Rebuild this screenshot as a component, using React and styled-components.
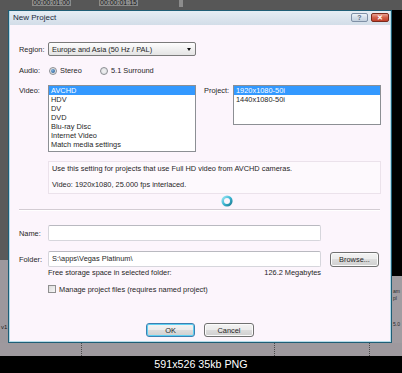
import React from "react";
import styled, { createGlobalStyle } from "styled-components";

const Global = createGlobalStyle`
  html, body { margin: 0; padding: 0; background: #000; }
  #root { width: 402px; height: 373px; }
`;

const Screen = styled.div`
  width: 402px;
  height: 373px;
  display: flex;
  flex-direction: column;
  overflow: hidden;
  font-family: "Liberation Sans", Arial, sans-serif;
`;

const Shot = styled.div`
  height: 356px;
  display: flex;
  flex-direction: column;
  background: #9e999e;
`;

const Ruler = styled.div`
  height: 10px;
  background: #575757;
  display: flex;
  align-items: flex-start;
  font-size: 7px;
  line-height: 6px;
  color: #161616;
  overflow: hidden;
`;

const Timecode = styled.span`
  margin-left: ${(p) => p.$ml}px;
  background: #8c8c8c;
  padding: 0 1px;
  height: 6px;
`;

const RulerMark = styled.span`
  margin-left: ${(p) => p.$ml}px;
  width: 4px;
  height: 7px;
  background: #8c8c8c;
`;

const Stage = styled.div`
  height: 333px;
  display: flex;
`;

const LeftTrack = styled.div`
  width: 8px;
  background: linear-gradient(#5a5a5a 0 250px, #9d989d 250px);
  display: flex;
  flex-direction: column;
  justify-content: flex-end;
  font-size: 6px;
  color: #222;
  overflow: hidden;
  padding-left: 1px;
  box-sizing: border-box;
`;

const TrackText = styled.span`
  margin-bottom: ${(p) => p.$mb || 0}px;
  margin-top: ${(p) => p.$mt || 0}px;
  line-height: 7px;
  white-space: nowrap;
`;

const RightTrack = styled.div`
  width: 10px;
  background: linear-gradient(#000 0 266px, #a19ca1 266px);
  display: flex;
  flex-direction: column;
  padding-top: 278px;
  box-sizing: border-box;
  font-size: 5px;
  color: #2a2a2a;
  overflow: hidden;
  padding-left: 1px;
`;

const BottomTracks = styled.div`
  height: 13px;
  display: flex;
  background: #9e999e;
`;

const Dotted = styled.div`
  margin-left: ${(p) => p.$ml}px;
  width: 0;
  border-left: 1px dotted #4a4a4a;
`;

const Caption = styled.div`
  height: 17px;
  background: #000;
  color: #fff;
  font-size: 10.7px;
  line-height: 17px;
  text-align: center;
`;

const Dialog = styled.div`
  position: relative;
  width: 384px;
  height: 333px;
  box-sizing: border-box;
  border: 1px solid #1f5e76;
  display: flex;
  flex-direction: column;
`;

const TitleBar = styled.div`
  height: 14px;
  flex: none;
  display: flex;
  align-items: flex-start;
  background: linear-gradient(#e6edf4, #d2dde8);
  border-left: 1px solid #b4dbe9;
  border-right: 1px solid #b4dbe9;
`;

const Title = styled.span`
  margin-left: 3px;
  font-size: 8px;
  line-height: 14px;
  color: #1c2b3c;
  flex: 1;
`;

const CapButton = styled.div`
  margin-top: 2px;
  width: ${(p) => p.$w}px;
  height: 9px;
  box-sizing: border-box;
  border-radius: 2px;
  display: flex;
  align-items: center;
  justify-content: center;
  font-size: 7px;
  font-weight: bold;
  line-height: 9px;
  border: 1px solid ${(p) => (p.$close ? "#7b2a1c" : "#7f90a6")};
  background: ${(p) =>
    p.$close
      ? "linear-gradient(#eba08f, #d2604a 50%, #c2402a)"
      : "linear-gradient(#eef3f8, #d4dfea 50%, #c3d0de)"};
  color: ${(p) => (p.$close ? "#fff" : "#5a6c82")};
  margin-right: ${(p) => p.$mr || 0}px;
`;

const Client = styled.div`
  flex: 1;
  display: flex;
  flex-direction: column;
  background: #fcf5fc;
  border: 1px solid #b4dbe9;
  border-top: none;
  padding: 0 9px 4px 9px;
  font-size: 7.4px;
  color: #1f1f1f;
`;

const Row = styled.div`
  display: flex;
  align-items: ${(p) => (p.$top ? "flex-start" : "center")};
  margin-top: ${(p) => p.$mt || 0}px;
  margin-left: ${(p) => p.$ml || 0}px;
  height: ${(p) => (p.$h ? `${p.$h}px` : "auto")};
`;

const Label = styled.div`
  width: 29px;
  flex: none;
  line-height: 9px;
  margin-top: ${(p) => p.$mt || 0}px;
  margin-left: ${(p) => p.$ml || 0}px;
`;

const Combo = styled.div`
  width: 148px;
  height: 14px;
  box-sizing: border-box;
  border: 1px solid #7a7a7a;
  border-radius: 2px;
  background: linear-gradient(#fdfdfd, #f0f0f0 50%, #e4e4e4);
  display: flex;
  align-items: center;
  padding: 0 3px 0 3px;
`;

const ComboText = styled.span`
  flex: 1;
`;

const Arrow = styled.span`
  width: 0;
  height: 0;
  border-left: 2.5px solid transparent;
  border-right: 2.5px solid transparent;
  border-top: 3px solid #111;
  margin-right: 1px;
`;

const Option = styled.label`
  display: flex;
  align-items: center;
  width: ${(p) => (p.$w ? `${p.$w}px` : "auto")};
  margin-left: ${(p) => p.$ml || 0}px;
  gap: 3px;
`;

const Radio = styled.span`
  width: 8px;
  height: 8px;
  box-sizing: border-box;
  border-radius: 50%;
  border: 1px solid #8b8e92;
  background: radial-gradient(circle, #f2f2f2, #d9dce0);
  display: flex;
  align-items: center;
  justify-content: center;
  &::after {
    content: "";
    display: ${(p) => (p.$on ? "block" : "none")};
    width: 4px;
    height: 4px;
    border-radius: 50%;
    background: radial-gradient(circle at 35% 35%, #7fb2e0, #1d4f86);
  }
`;

const ListBox = styled.div`
  width: 148px;
  height: ${(p) => p.$h}px;
  box-sizing: border-box;
  border: 1px solid #8c8f94;
  background: #fff;
  margin-left: ${(p) => p.$ml || 0}px;
  flex: none;
`;

const Item = styled.div`
  height: 9px;
  line-height: 9px;
  padding-left: 2px;
  background: ${(p) => (p.$sel ? "#3399ff" : "transparent")};
  color: ${(p) => (p.$sel ? "#fff" : "#1f1f1f")};
  white-space: nowrap;
`;

const InfoBox = styled.div`
  margin-top: 9px;
  margin-left: 29px;
  width: 333px;
  height: 33px;
  box-sizing: border-box;
  border: 1px solid #ebe2eb;
  background: #fdf9fd;
  padding: 3px 3px 0 3px;
  display: flex;
  flex-direction: column;
  gap: 8px;
  line-height: 8px;
`;

const Separator = styled.div`
  margin-top: 15px;
  width: 361px;
  height: 1px;
  background: #d3ccd3;
  border-bottom: 1px solid #ffffff;
`;

const TextInput = styled.div`
  width: 273px;
  height: 16px;
  box-sizing: border-box;
  border: 1px solid #d6d6dc;
  border-top-color: #b9b9c0;
  border-radius: 2px;
  background: #fff;
  padding-left: 3px;
  line-height: 14px;
  flex: none;
`;

const Button = styled.div`
  width: ${(p) => p.$w}px;
  height: ${(p) => p.$h || 14}px;
  box-sizing: border-box;
  border-radius: 3px;
  border: 1px solid ${(p) => (p.$default ? "#3c7fb1" : "#707070")};
  background: linear-gradient(#f3f3f3, #ebebeb 50%, #dddddd 50%, #cfcfcf);
  box-shadow: ${(p) =>
    p.$default ? "inset 0 0 0 1px #5ed0f2" : "inset 0 0 0 1px #fbfbfb"};
  display: flex;
  align-items: center;
  justify-content: center;
  margin-left: ${(p) => p.$ml || 0}px;
  flex: none;
`;

const Storage = styled.div`
  margin-top: 2px;
  margin-left: 29px;
  width: 273px;
  height: 8px;
  line-height: 8px;
  display: flex;
  justify-content: space-between;
`;

const Check = styled.span`
  width: 8px;
  height: 8px;
  box-sizing: border-box;
  border: 1px solid #8f8f8f;
  background: linear-gradient(135deg, #dcdcdc, #f6f6f6);
`;

const Buttons = styled.div`
  margin-top: auto;
  display: flex;
  justify-content: center;
  gap: 9px;
`;

const BusyCursor = styled.svg`
  position: absolute;
  left: 212px;
  top: 184px;
  width: 12px;
  height: 12px;
`;

export default function App() {
  return (
    <>
      <Global />
      <Screen>
        <Shot>
          <Ruler>
            <Timecode $ml={32}>00:00:01:00</Timecode>
            <Timecode $ml={28}>00:00:01:15</Timecode>
            <RulerMark $ml={41} />
          </Ruler>
          <Stage>
            <LeftTrack>
              <TrackText $mb={12}>v1</TrackText>
            </LeftTrack>
            <Dialog>
              <TitleBar>
                <Title>New Project</Title>
                <CapButton $w={17} $mr={3}>?</CapButton>
                <CapButton $w={18} $close $mr={1}>✕</CapButton>
              </TitleBar>
              <Client>
                <Row $mt={17} $h={14}>
                  <Label>Region:</Label>
                  <Combo>
                    <ComboText>Europe and Asia (50 Hz / PAL)</ComboText>
                    <Arrow />
                  </Combo>
                </Row>
                <Row $mt={10} $h={9}>
                  <Label>Audio:</Label>
                  <Option $w={51} $ml={1}>
                    <Radio $on />
                    Stereo
                  </Option>
                  <Option>
                    <Radio />
                    5.1 Surround
                  </Option>
                </Row>
                <Row $mt={10} $top>
                  <Label $mt={1}>Video:</Label>
                  <ListBox $h={67}>
                    <Item $sel>AVCHD</Item>
                    <Item>HDV</Item>
                    <Item>DV</Item>
                    <Item>DVD</Item>
                    <Item>Blu-ray Disc</Item>
                    <Item>Internet Video</Item>
                    <Item>Match media settings</Item>
                  </ListBox>
                  <Label $mt={1} $ml={8}>Project:</Label>
                  <ListBox $h={40}>
                    <Item $sel>1920x1080-50i</Item>
                    <Item>1440x1080-50i</Item>
                  </ListBox>
                </Row>
                <InfoBox>
                  <span>Use this setting for projects that use Full HD video from AVCHD cameras.</span>
                  <span>Video: 1920x1080, 25.000 fps interlaced.</span>
                </InfoBox>
                <Separator />
                <Row $mt={14} $h={16}>
                  <Label>Name:</Label>
                  <TextInput />
                </Row>
                <Row $mt={10} $h={16}>
                  <Label>Folder:</Label>
                  <TextInput>S:\apps\Vegas Platinum\</TextInput>
                  <Button $w={49} $h={15} $ml={9}>Browse...</Button>
                </Row>
                <Storage>
                  <span>Free storage space in selected folder:</span>
                  <span>126.2 Megabytes</span>
                </Storage>
                <Row $mt={7} $h={10} $ml={29}>
                  <Option>
                    <Check />
                    Manage project files (requires named project)
                  </Option>
                </Row>
                <Buttons>
                  <Button $w={49} $default>OK</Button>
                  <Button $w={50}>Cancel</Button>
                </Buttons>
              </Client>
              <BusyCursor viewBox="0 0 12 12">
                <defs>
                  <linearGradient id="ring" x1="0" y1="0" x2="1" y2="1">
                    <stop offset="0" stopColor="#9be6f3" />
                    <stop offset="0.5" stopColor="#3cb7d3" />
                    <stop offset="1" stopColor="#1f7f95" />
                  </linearGradient>
                </defs>
                <circle cx="6" cy="6" r="4.3" fill="none" stroke="url(#ring)" strokeWidth="2.6" />
              </BusyCursor>
            </Dialog>
            <RightTrack>
              <TrackText>am</TrackText>
              <TrackText>pl</TrackText>
              <TrackText $mt={19}>5.0</TrackText>
            </RightTrack>
          </Stage>
          <BottomTracks>
            <Dotted $ml={81} />
            <Dotted $ml={192} />
            <Dotted $ml={94} />
          </BottomTracks>
        </Shot>
        <Caption>591x526 35kb PNG</Caption>
      </Screen>
    </>
  );
}
